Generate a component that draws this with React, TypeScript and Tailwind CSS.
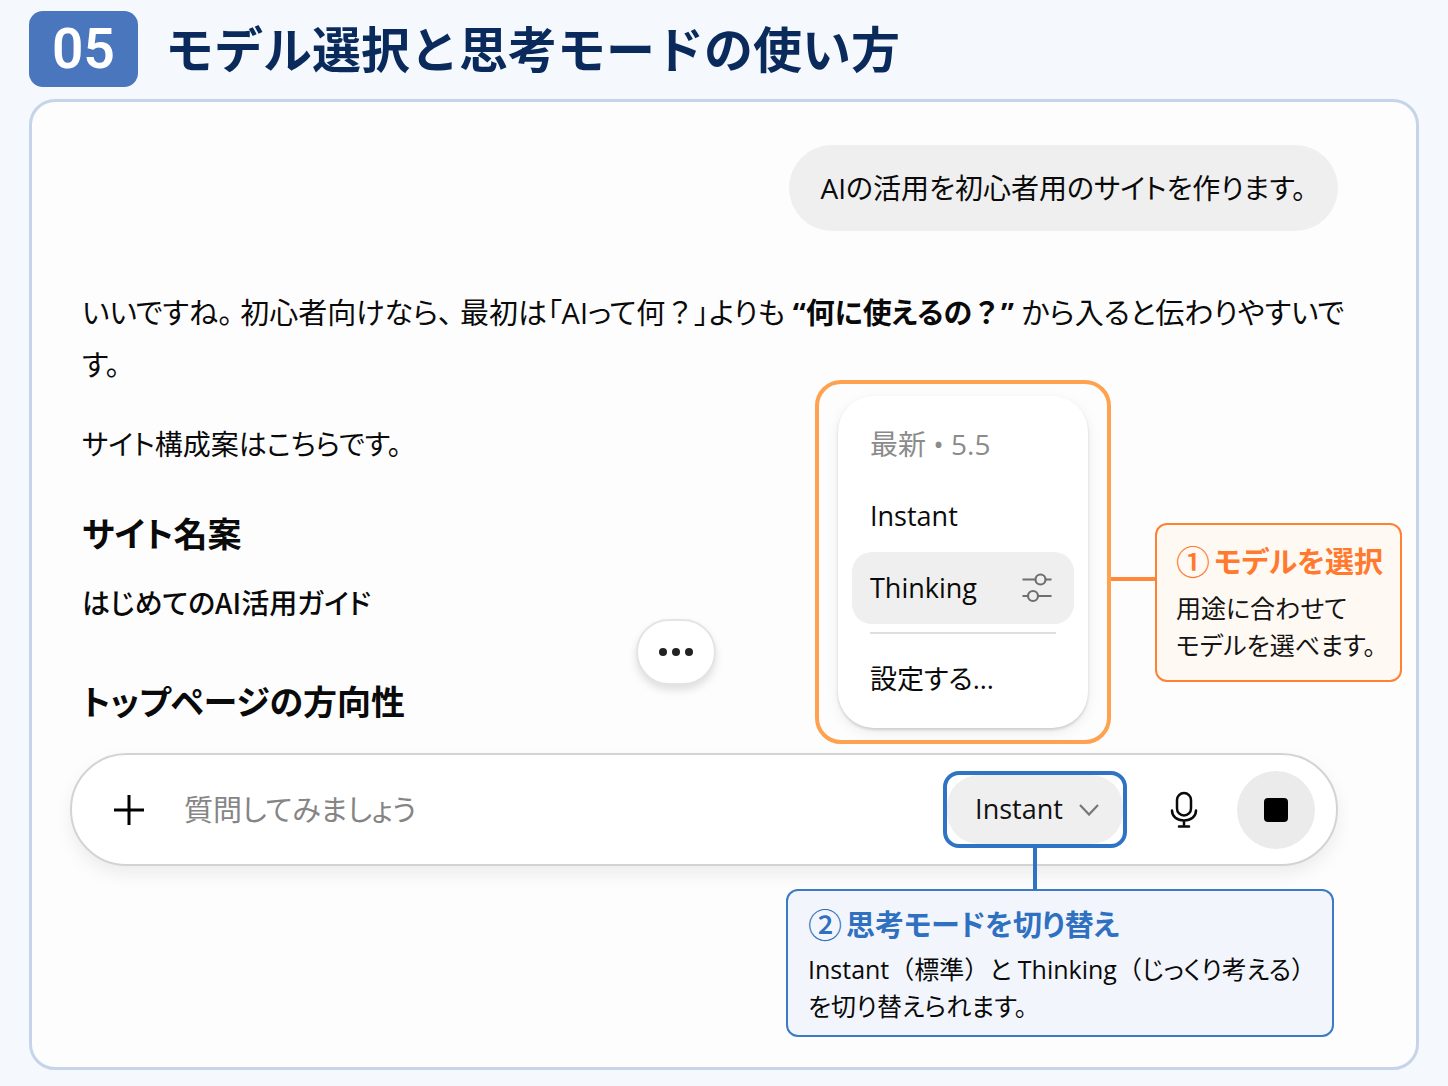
import type { ReactNode } from "react";

function SlidersIcon() {
  return (
    <svg width="30" height="30" viewBox="0 0 30 30" fill="none" stroke="#6f6f6f" strokeWidth="2.2" aria-hidden="true">
      <path d="M0.5 6.5H13M24 6.5H29.5M0.5 23H5.5M16.5 23H29.5" />
      <circle cx="18.5" cy="6.5" r="5" />
      <circle cx="11" cy="23" r="5" />
    </svg>
  );
}

function MicIcon() {
  return (
    <svg width="28" height="38" viewBox="0 0 28 38" fill="none" stroke="#0a0a0a" strokeWidth="2.5" strokeLinecap="round" aria-hidden="true">
      <rect x="7" y="2" width="14" height="22.5" rx="7" />
      <path d="M2 19.500C2 25.500 7 29.500 14 29.500S26 25.500 26 19.500M14 29.500V35.500M9 35.500H19" />
    </svg>
  );
}

function MenuItem({ children, active = false }: { children: ReactNode; active?: boolean }) {
  return (
    <button
      type="button"
      role="menuitem"
      className={
        active
          ? "flex h-18 w-full items-center justify-between rounded-[20px] bg-[#efefef] pr-[22px] pl-[18px] text-left"
          : "flex h-18 w-full items-center px-[18px] text-left"
      }
    >
      {children}
    </button>
  );
}

function ModelMenu() {
  return (
    <div className="absolute right-[-66px] bottom-full mb-[11px] flex items-start">
      <div className="rounded-[26px] border-4 border-[#ffa250] bg-[#fdfdfd] px-[19px] py-3">
        <div role="menu" className="w-[250px] rounded-[36px] bg-white px-3.5 pt-3 pb-[13px] text-[27px] text-[#0a0a0a] shadow-[0_2px_3px_rgba(0,0,0,0.15),0_4px_14px_rgba(0,0,0,0.07)]">
          <p className="flex h-18 items-center px-[18px] text-[28px] text-[#8b8b8b]">最新 • 5.5</p>
          <MenuItem>Instant</MenuItem>
          <MenuItem active>
            Thinking
            <SlidersIcon />
          </MenuItem>
          <hr className="mx-[18px] mt-2 mb-[9px] border-t-2 border-[#dedede]" />
          <MenuItem>設定する...</MenuItem>
        </div>
      </div>
      <div className="mt-[197px] h-1 w-11 bg-[#ff8a3c]" />
      <aside className="mt-[143px] w-[247px] rounded-xl border-2 border-[#ff8136] bg-[#fff9f3] pt-[17px] pb-4 pl-[19px] text-[25px] leading-[37px] whitespace-nowrap text-[#141414]">
        <CalloutTitle mark="①" className="text-[#ff7a2e]">モデルを選択</CalloutTitle>
        <p className="mt-2">
          用途に合わせて
          <br />
          モデルを選べます。
        </p>
      </aside>
    </div>
  );
}

function CalloutTitle({ mark, className, children }: { mark: string; className: string; children: ReactNode }) {
  return (
    <h3 className={"flex items-center gap-1 text-[29px] leading-10 font-bold " + className}>
      <span className="text-[34px] font-medium">{mark}</span>
      {children}
    </h3>
  );
}

function FullWidth({ children }: { children: ReactNode }) {
  return <span className="[font-feature-settings:normal]">{children}</span>;
}

function Composer() {
  return (
    <form className="relative mt-[25px] mr-10 flex h-[113px] items-center rounded-full border-2 border-[#d3d3d5] bg-white pr-[21px] pl-[42px] shadow-[0_8px_18px_rgba(0,0,0,0.07)]">
      <button type="button" aria-label="追加" className="text-black">
        <svg width="30" height="30" viewBox="0 0 30 30" stroke="currentColor" strokeWidth="3" aria-hidden="true">
          <path d="M15 0V30M0 15H30" />
        </svg>
      </button>
      <input
        type="text"
        aria-label="質問"
        placeholder="質問してみましょう"
        className="ml-10 min-w-0 flex-1 bg-transparent text-[29px] outline-none placeholder:text-[#858585]"
      />
      <div className="relative">
        <button type="button" className="flex h-[77px] w-[184px] rounded-2xl border-4 border-[#2f73c4] bg-white text-[27px] text-[#111]">
          <span className="flex h-full w-full items-center justify-center gap-4 rounded-[32px] bg-[#efefef] pl-1">
            Instant
            <svg width="20" height="12" viewBox="0 0 20 12" fill="none" stroke="#777" strokeWidth="2.2" aria-hidden="true">
              <path d="M1 1L10 10.500L19 1" />
            </svg>
          </span>
        </button>
        <div className="absolute top-full left-1/2 -ml-0.5 h-[42px] w-1 bg-[#2f73c4]" />
      </div>
      <button type="button" aria-label="音声入力" className="mr-[39px] ml-[43px]">
        <MicIcon />
      </button>
      <button type="button" aria-label="停止" className="flex size-[78px] items-center justify-center rounded-full bg-[#ebebeb]">
        <span className="size-6 rounded-[4px] bg-black" />
      </button>
      <button
        type="button"
        aria-label="その他"
        className="absolute bottom-full left-1/2 mb-[70px] -ml-[68px] flex h-[66px] w-20 items-center justify-center gap-[5px] rounded-[33px] border-2 border-[#e4e4e4] bg-white shadow-[0_5px_9px_rgba(0,0,0,0.12)]"
      >
        <span className="size-2 rounded-full bg-[#222]" />
        <span className="size-2 rounded-full bg-[#222]" />
        <span className="size-2 rounded-full bg-[#222]" />
      </button>
      <ModelMenu />
    </form>
  );
}

export default function App() {
  return (
    <main lang="ja" className="flex min-h-screen flex-col bg-[#f5f9fe] px-[29px] pt-[11px] pb-[17px] font-['Open_Sans','Noto_Sans_CJK_JP',sans-serif] text-[#0a0a0a] [font-feature-settings:'palt']">
      <header className="flex items-start gap-[27px]">
        <span className="flex h-19 w-[109px] items-center justify-center rounded-[14px] bg-[#4a76bd] font-['Roboto',sans-serif] text-[55px] leading-none font-semibold text-white">
          05
        </span>
        <h1 className="font-['Noto_Sans_CJK_JP',sans-serif] text-[49px] leading-[72px] font-bold text-[#0a2a5c] [font-feature-settings:normal]">
          モデル選択と思考モードの使い方
        </h1>
      </header>

      <section className="mt-3 flex-1 rounded-[26px] border-3 border-[#c6d4ea] bg-[#fdfdfe] pt-[43px] pr-[38px] pb-[30px] pl-[38px]">
        <div className="mr-10 flex justify-end">
          <p className="rounded-full bg-[#efefef] px-8 py-[17px] text-[28px] leading-[52px]">
            AIの活用を初心者用のサイトを作ります。
          </p>
        </div>

        <article className="mt-14 pr-5 pl-3 text-[28px] leading-[52px]">
          <p className="text-[29px]">
            いいですね。 初心者向けなら、 最初は「AIって何<FullWidth>？</FullWidth>」よりも <strong>“何に使えるの<FullWidth>？</FullWidth>”</strong> から入ると伝わりやすいです。
          </p>
          <p className="mt-[27px]">サイト構成案はこちらです。</p>
          <h2 className="mt-[38px] text-[34px] font-bold">サイト名案</h2>
          <p className="mt-4 font-['Noto_Sans_CJK_JP',sans-serif] font-medium">はじめてのAI活用ガイド</p>
          <h2 className="mt-12 text-[34px] font-bold">トップページの方向性</h2>
        </article>

        <Composer />

        <div className="mt-[23px] mr-[44px] flex justify-end">
          <aside className="w-[548px] rounded-xl border-2 border-[#3a7ac6] bg-[#f2f6fc] pt-[14px] pb-2.5 pl-5 text-[25px] leading-[37px] whitespace-nowrap">
            <CalloutTitle mark="②" className="text-[#2f70c0]">思考モードを切り替え</CalloutTitle>
            <p className="mt-1.5">
              Instant<FullWidth>（</FullWidth>標準<FullWidth>）</FullWidth>と Thinking<FullWidth>（</FullWidth>じっくり考える<FullWidth>）</FullWidth>
              <br />
              を切り替えられます。
            </p>
          </aside>
        </div>
      </section>
    </main>
  );
}
